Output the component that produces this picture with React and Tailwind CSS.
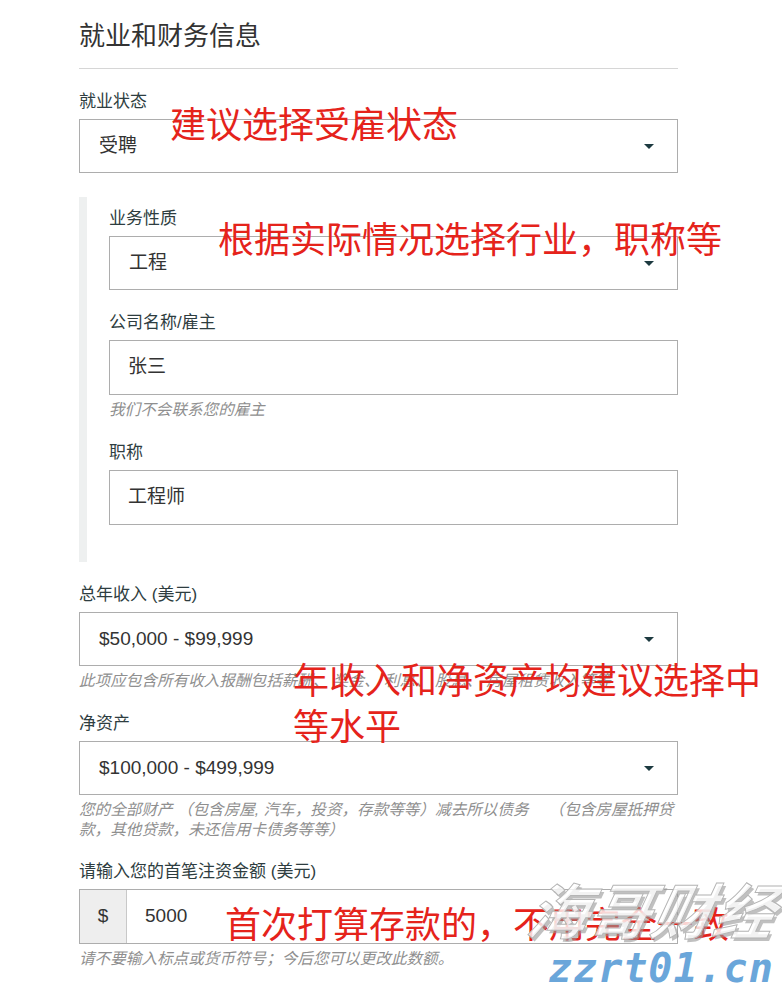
import React from "react";

function Label({ children, className = "" }) {
  return (
    <div className={"text-[17px] leading-5 text-[#2e3d40] " + className}>{children}</div>
  );
}

function Select({ value }) {
  return (
    <div className="mt-[7px] h-[54px] border border-[#adadad] bg-white flex items-center justify-between pl-[19px] pr-[23px] text-[19px] text-[#333]">
      <span>{value}</span>
      <span className="w-0 h-0 border-l-[5px] border-r-[5px] border-t-[5px] border-l-transparent border-r-transparent border-t-[#1d3a40]"></span>
    </div>
  );
}

function Input({ value }) {
  return (
    <div className="mt-[7px] h-[55px] border border-[#adadad] bg-white flex items-center pl-[18px] text-[19px] text-[#333]">
      {value}
    </div>
  );
}

function Help({ children, className = "" }) {
  return (
    <div className={"mt-[5px] text-[15.6px] leading-5 italic text-[#8f8f8f] " + className}>{children}</div>
  );
}

export default function App() {
  return (
    <div className="relative w-[782px] min-h-[990px] bg-white overflow-hidden font-['Liberation_Sans','Noto_Sans_CJK_SC',sans-serif]">
      <div className="ml-[79px] w-[599px] pt-[18px]">
        <div className="text-[26px] leading-[36px] text-[#333]">就业和财务信息</div>
        <div className="mt-[14px] border-b border-[#d6d6d6]"></div>

        <Label className="mt-[23px]">就业状态</Label>
        <Select value="受聘" />

        <div className="mt-6 border-l-[8px] border-[#eef0f0] pl-[22px] pt-3 pb-[37px]">
          <Label>业务性质</Label>
          <Select value="工程" />
          <Label className="mt-[23px]">公司名称/雇主</Label>
          <Input value="张三" />
          <Help>我们不会联系您的雇主</Help>
          <Label className="mt-[23px]">职称</Label>
          <Input value="工程师" />
        </div>

        <Label className="mt-[23px]">总年收入 (美元)</Label>
        <Select value="$50,000 - $99,999" />
        <Help className="whitespace-nowrap">此项应包含所有收入报酬包括薪酬、 奖金、 利息、 股息、 房屋租赁收入等等</Help>

        <Label className="mt-[23px]">净资产</Label>
        <Select value="$100,000 - $499,999" />
        <Help>
          <div className="whitespace-nowrap">您的全部财产 （包含房屋, 汽车，投资，存款等等）减去所以债务　 （包含房屋抵押贷</div>
          <div className="whitespace-nowrap">款，其他贷款，未还信用卡债务等等）</div>
        </Help>

        <Label className="mt-[22px]">请输入您的首笔注资金额 (美元)</Label>
        <div className="mt-[7px] h-[55px] border border-[#adadad] bg-white flex text-[19px] text-[#333]">
          <div className="w-[47px] bg-[#eeeeee] border-r border-[#c8c8c8] flex items-center justify-center">$</div>
          <div className="flex items-center pl-[18px]">5000</div>
        </div>
        <Help>请不要输入标点或货币符号；今后您可以更改此数额。</Help>
      </div>

      <div className="absolute left-[170px] top-[102px] text-[36px] leading-[40px] text-[#e5231b] font-['Noto_Sans_CJK_SC',sans-serif] whitespace-nowrap">
        建议选择受雇状态
      </div>
      <div className="absolute left-[218px] top-[217px] text-[36px] leading-[40px] text-[#e5231b] font-['Noto_Sans_CJK_SC',sans-serif] whitespace-nowrap">
        根据实际情况选择行业，职称等
      </div>
      <div className="absolute left-[293px] top-[655px] text-[36px] leading-[46px] text-[#e5231b] font-['Noto_Sans_CJK_SC',sans-serif] whitespace-nowrap">
        年收入和净资产均建议选择中
        <br />
        等水平
      </div>
      <div className="absolute left-[225px] top-[902px] text-[36px] leading-[40px] text-[#e5231b] font-['Noto_Sans_CJK_SC',sans-serif] whitespace-nowrap">
        首次打算存款的，不用完全一致
      </div>

      <div className="absolute left-[530px] top-[868px] text-[60px] leading-[80px] tracking-[2px] font-bold italic text-white/80 whitespace-nowrap font-['Noto_Sans_CJK_SC',sans-serif] [-webkit-text-stroke:1px_#b5b5b5] [text-shadow:3px_3px_0_rgba(150,150,150,0.6)] -skew-x-12">
        海哥财经
      </div>
      <div className="absolute left-[548px] top-[948px] text-[40px] leading-[40px] font-bold italic tracking-[1px] text-[#6aa6da] whitespace-nowrap font-['DejaVu_Sans_Mono',monospace]">
        zzrt01.cn
      </div>
    </div>
  );
}
